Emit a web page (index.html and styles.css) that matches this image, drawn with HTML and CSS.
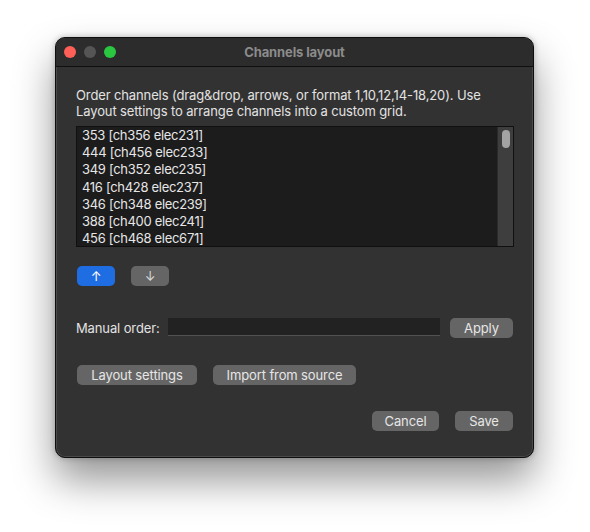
FILE: index.html
```html
<!DOCTYPE html>
<html lang="en">
<head>
    <meta charset="UTF-8">
    <meta name="viewport" content="width=device-width, initial-scale=1.0">
    <title>Channels layout</title>
    <link rel="stylesheet" href="styles.css">
</head>
<body>
    <div class="window">
        <div class="titlebar">
            <div class="lights">
                <span class="light close"></span>
                <span class="light idle"></span>
                <span class="light zoom"></span>
            </div>
            <div class="title">Channels layout</div>
        </div>
        <div class="content">
            <p class="hint">Order channels (drag&amp;drop, arrows, or format 1,10,12,14-18,20). Use Layout settings to arrange channels into a custom grid.</p>
            <div class="channel-list">
                <ul class="rows">
                    <li>353 [ch356 elec231]</li>
                    <li>444 [ch456 elec233]</li>
                    <li>349 [ch352 elec235]</li>
                    <li>416 [ch428 elec237]</li>
                    <li>346 [ch348 elec239]</li>
                    <li>388 [ch400 elec241]</li>
                    <li>456 [ch468 elec671]</li>
                </ul>
                <div class="scrollbar"><div class="thumb"></div></div>
            </div>
            <div class="arrows">
                <button class="btn arrow primary">&#8593;</button>
                <button class="btn arrow">&#8595;</button>
            </div>
            <div class="manual">
                <label class="manual-label">Manual order:</label>
                <input class="manual-input" type="text">
                <button class="btn apply">Apply</button>
            </div>
            <div class="tools">
                <button class="btn layout">Layout settings</button>
                <button class="btn import">Import from source</button>
            </div>
            <div class="footer">
                <button class="btn cancel">Cancel</button>
                <button class="btn save">Save</button>
            </div>
        </div>
    </div>
</body>
</html>
```

FILE: styles.css
```css
html {
    background: #fff;
}

body {
    margin: 0;
    min-height: 532px;
    box-sizing: border-box;
    padding: 37px 0 0 55px;
    background: #fff;
    font-family: 'Inter', 'Liberation Sans', sans-serif;
    font-size: 13px;
    letter-spacing: -0.12px;
    color: #dedede;
}

.window {
    width: 477px;
    background: #323232;
    border: 1px solid #0e0e0e;
    border-radius: 10px;
    box-shadow: inset 0 0 0 1px #4a4a4a, 0 22px 40px rgba(0, 0, 0, 0.42), 0 0 6px rgba(0, 0, 0, 0.25);
    overflow: hidden;
}

.titlebar {
    position: relative;
    height: 28px;
    background: #2c2c2c;
    border-bottom: 1px solid #0f0f0f;
    display: flex;
    align-items: center;
    justify-content: center;
}

.lights {
    position: absolute;
    left: 8px;
    top: 8px;
    display: flex;
    gap: 8px;
}

.light {
    width: 12px;
    height: 12px;
    border-radius: 50%;
}

.light.close { background: #fe5f57; }
.light.idle { background: #555; }
.light.zoom { background: #2ac840; }

.title {
    font-weight: 700;
    font-size: 13px;
    color: #8b8b8b;
}

.content {
    padding: 20px 19px 26px 20px;
}

.hint {
    margin: 0;
    line-height: 16px;
    color: #e2e2e2;
}

.channel-list {
    margin-top: 7px;
    height: 119px;
    display: flex;
    background: #1c1c1c;
    border: 1px solid #101010;
}

.rows {
    flex: 1;
    list-style: none;
    margin: 0;
    padding: 0 0 0 5px;
    letter-spacing: -0.3px;
}

.rows li {
    height: 17.2px;
    line-height: 17.2px;
    color: #e6e6e6;
}

.scrollbar {
    width: 15px;
    background: #3e3e3e;
    border-left: 1px solid #2a2a2a;
    display: flex;
    justify-content: center;
    padding-top: 3px;
}

.thumb {
    width: 8px;
    height: 18px;
    border-radius: 4px;
    background: #a3a3a3;
}

.btn {
    height: 20px;
    padding: 0;
    border: none;
    border-radius: 5px;
    background: #656565;
    color: #e6e6e6;
    font-family: inherit;
    font-size: 13px;
    letter-spacing: -0.12px;
    line-height: 20px;
}

.arrows {
    margin-top: 19px;
    display: flex;
    gap: 16px;
    padding-left: 1px;
}

.arrow {
    width: 38px;
    font-size: 13px;
    color: #d8d8d8;
}

.arrow.primary {
    background: #1f6de2;
    color: #fff;
}

.manual {
    margin-top: 32px;
    display: flex;
    align-items: flex-start;
}

.manual-label {
    width: 92px;
    line-height: 20px;
    color: #e2e2e2;
}

.manual-input {
    width: 272px;
    height: 18px;
    box-sizing: border-box;
    margin: 0 10px 0 0;
    padding: 0 4px;
    background: #222;
    border: none;
    border-bottom: 1px solid #525252;
    color: #e2e2e2;
    font-family: inherit;
}

.apply { width: 63px; }

.tools {
    margin-top: 27px;
    display: flex;
    gap: 16px;
    padding-left: 1px;
}

.layout { width: 120px; }
.import { width: 143px; }

.footer {
    margin-top: 26px;
    display: flex;
    justify-content: flex-end;
    gap: 16px;
    padding-right: 1px;
}

.cancel { width: 67px; }
.save { width: 58px; }
```
